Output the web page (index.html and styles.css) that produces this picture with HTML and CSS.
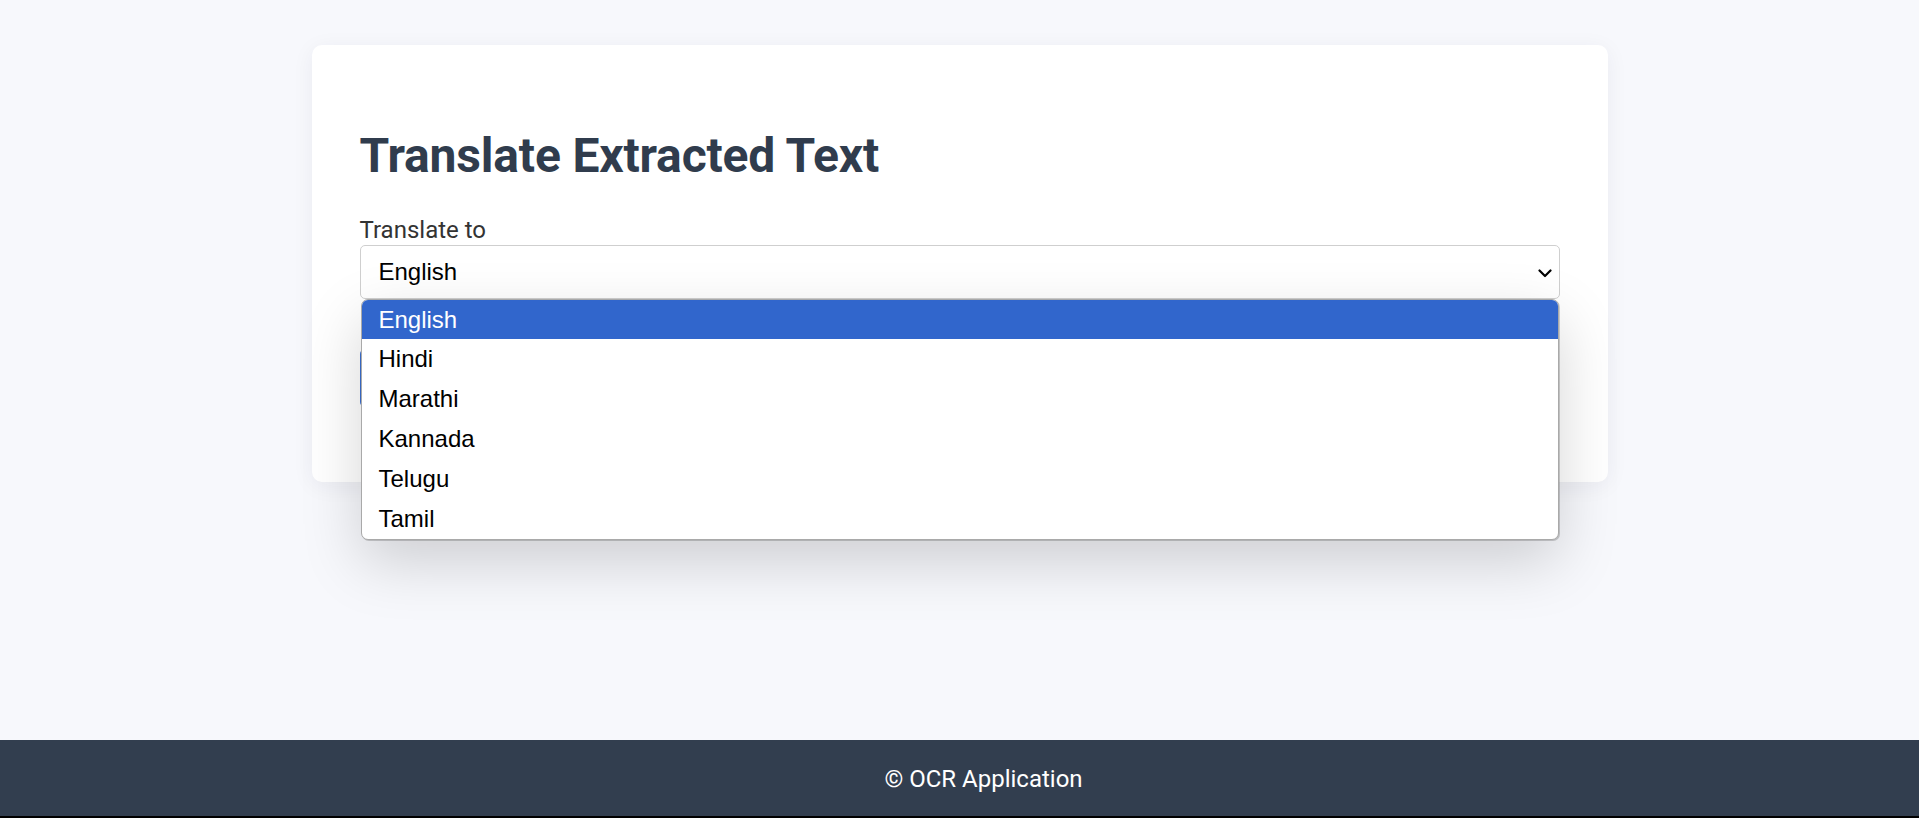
FILE: index.html
```html
<!DOCTYPE html>
<html lang="en">
<head>
<meta charset="utf-8">
<title>Translate Extracted Text</title>
<link rel="stylesheet" href="styles.css">
</head>
<body>
<main class="page">
  <section class="card">
    <h1 class="title">Translate Extracted Text</h1>
    <label class="label" for="lang">Translate to</label>
    <div class="select-wrap">
      <div class="select" id="lang">
        <span class="select-value">English</span>
        <svg class="chevron" width="14" height="9" viewBox="0 0 14 9" aria-hidden="true">
          <polyline points="1.5,1.5 7,7 12.5,1.5" fill="none" stroke="#000" stroke-width="2.2" stroke-linecap="round" stroke-linejoin="round"/>
        </svg>
      </div>
      <ul class="dropdown">
        <li class="option selected">English</li>
        <li class="option">Hindi</li>
        <li class="option">Marathi</li>
        <li class="option">Kannada</li>
        <li class="option">Telugu</li>
        <li class="option">Tamil</li>
      </ul>
    </div>
    <button class="btn" type="button" aria-label="Translate"></button>
  </section>
</main>
<footer class="footer">© OCR Application</footer>
</body>
</html>
```

FILE: styles.css
```css
html {
  background: #000;
}
body {
  margin: 0;
  min-height: 816px;
  display: flex;
  flex-direction: column;
  background: #f7f8fc;
  font-family: Roboto, "Liberation Sans", Arial, sans-serif;
}
.page {
  flex: 1;
  padding-top: 45px;
}
.card {
  box-sizing: border-box;
  width: 1296px;
  margin: 0 auto;
  padding: 48px 48px 48px;
  background: #fff;
  border-radius: 10px;
  box-shadow: 0 4px 22px rgba(30, 40, 70, 0.06);
}
.title {
  margin: 34px 0 32px;
  font-size: 48px;
  font-weight: 700;
  line-height: normal;
  letter-spacing: -0.18px;
  color: #303c4d;
}
.label {
  display: block;
  font-size: 24px;
  line-height: normal;
  color: #333;
}
.select-wrap {
  position: relative;
  margin-top: 1px;
}
.select {
  box-sizing: border-box;
  height: 54px;
  display: flex;
  align-items: center;
  justify-content: space-between;
  padding: 0 7px 0 18px;
  border: 1px solid #cfcfcf;
  border-radius: 5px;
  background: #fff;
  font-family: "Liberation Sans", Arial, sans-serif;
  font-size: 24px;
  color: #000;
}
.chevron {
  display: block;
  margin-top: 2px;
}
.dropdown {
  position: absolute;
  z-index: 2;
  top: 54px;
  left: 1px;
  right: 1px;
  margin: 0;
  padding: 0;
  list-style: none;
  background: #fff;
  border: 1px solid #a9a9a9;
  border-radius: 7px;
  overflow: hidden;
  box-shadow: 1px 1px 0 rgba(0, 0, 0, 0.18), 0 22px 60px rgba(0, 0, 0, 0.17);
  font-family: "Liberation Sans", Arial, sans-serif;
  font-size: 24px;
  color: #000;
}
.option {
  height: 40px;
  display: flex;
  align-items: center;
  padding-left: 17px;
}
.option.selected {
  height: 39px;
  background: #3166cc;
  color: #fff;
}
.btn {
  display: block;
  width: 200px;
  height: 58px;
  margin: 50px 0 27px;
  padding: 0;
  border: none;
  border-radius: 5px;
  background: #3b6fd0;
}
.footer {
  padding: 25px 0 23px 48px;
  background: #323e4f;
  color: #fff;
  text-align: center;
  font-size: 24px;
  line-height: normal;
}
```
